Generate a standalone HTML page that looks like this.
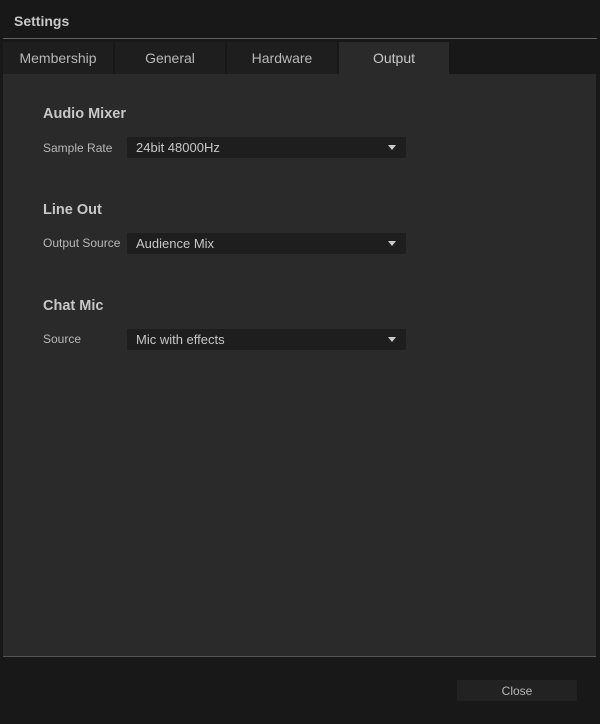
<!DOCTYPE html>
<html><head><style>
body{margin:0;width:600px;height:724px;background:#181818;font-family:"Liberation Sans",sans-serif;position:relative;overflow:hidden}
.a{position:absolute}
.title{left:14px;top:13px;color:#c8c8c8;font-weight:bold;font-size:14px}
.tab{top:42px;height:32px;width:110px;background:#1e1e1e;color:#b8b8b8;font-size:14px;text-align:center;line-height:32px}
.tab.on{background:#2a2a2a;color:#c8c8c8}
.panel{left:3px;top:74px;width:593px;height:582px;background:#2a2a2a;border-bottom:1px solid #555}
.h{left:43px;color:#c8c8c8;font-weight:bold;font-size:14.5px}
.l{left:43px;color:#b8b8b8;font-size:12px}
.dd{left:127px;width:279px;height:21px;background:#1e1e1e;color:#c8c8c8;font-size:13px;line-height:21px;text-indent:9px}
.dd:after{content:"";position:absolute;right:10px;top:8px;border-left:4px solid transparent;border-right:4px solid transparent;border-top:5px solid #ccc}
</style></head><body>
<div class="a title">Settings</div>
<div class="a" style="left:3px;top:38px;width:594px;height:1px;background:#606060"></div>
<div class="a tab" style="left:3px">Membership</div>
<div class="a tab" style="left:115px">General</div>
<div class="a tab" style="left:227px">Hardware</div>
<div class="a tab on" style="left:339px">Output</div>
<div class="a panel"></div>
<div class="a h" style="top:106px">Audio Mixer</div>
<div class="a l" style="top:141px">Sample Rate</div>
<div class="a dd" style="top:137px">24bit 48000Hz</div>
<div class="a h" style="top:202px">Line Out</div>
<div class="a l" style="top:236px">Output Source</div>
<div class="a dd" style="top:233px">Audience Mix</div>
<div class="a h" style="top:298px">Chat Mic</div>
<div class="a l" style="top:332px">Source</div>
<div class="a dd" style="top:329px">Mic with effects</div>
<div class="a" style="left:457px;top:680px;width:120px;height:21px;background:#222;color:#b8b8b8;font-size:12px;text-align:center;line-height:22px">Close</div>
</body></html>
